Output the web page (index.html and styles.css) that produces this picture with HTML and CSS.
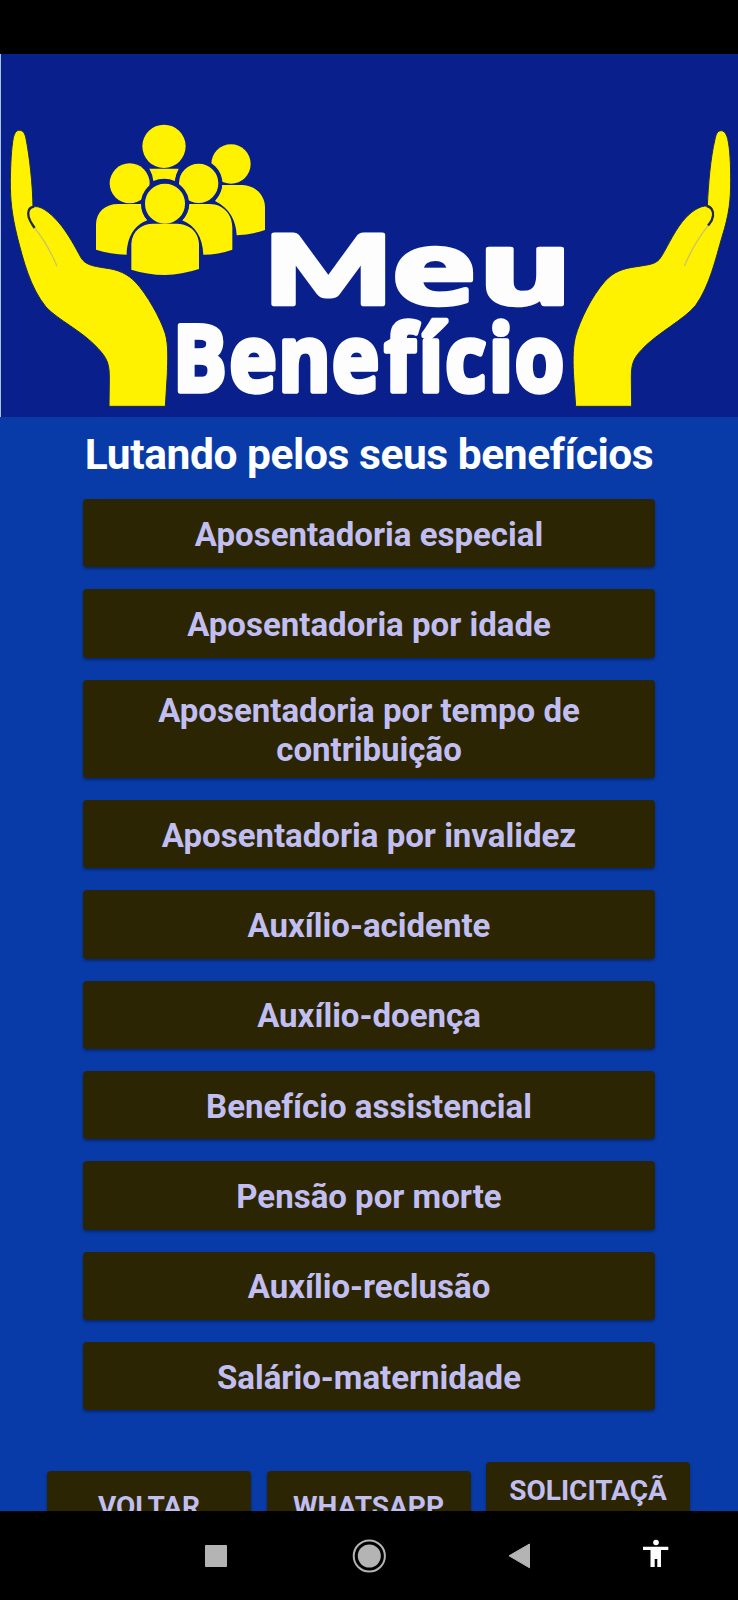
FILE: index.html
```html
<!DOCTYPE html>
<html lang="pt-BR">

<head>
  <meta charset="UTF-8">
  <meta name="viewport" content="width=device-width, initial-scale=1.0">
  <title>Meu Benefício</title>
  <link rel="stylesheet" href="styles.css">
</head>

<body>

  <div class="status"></div>

  <div class="tela">
    <svg class="logo" viewBox="0 41 2214 1089">
      <rect x="0" y="41" width="3" height="1089" fill="#a9c4ee"/>

      <!-- mão esquerda -->
      <g class="mao">
        <path d="M58 270C70 270 75 280 78 295C88 345 98 430 99 500C120 493 148 515 175 545C205 580 225 620 243 652C255 672 275 677 315 683C355 688 382 700 408 727C440 762 480 830 496 880C506 915 503 960 502 1000L496 1098H327L328 1020C329 970 322 955 295 925C245 870 175 840 138 800C90 740 70 660 52 590C35 520 31 480 31 420C32 370 34 325 40 292C44 278 49 270 58 270Z"/>
        <path class="dedo" d="M102 499C86 501 82 515 86 530C90 545 97 552 104 563"/>
        <path class="dobra" d="M104 563C130 595 155 640 171 678"/>
      </g>

      <!-- mão direita -->
      <g class="mao">
        <path d="M2163 271C2152 271 2148 282 2145 297C2132 350 2125 430 2122 497C2100 495 2070 515 2048 543C2018 580 1998 630 1979 656C1966 671 1950 673 1910 679C1870 684 1840 694 1814 724C1775 768 1740 840 1726 890C1717 930 1719 975 1721 1010L1727 1098H1895L1894 1020C1893 970 1900 955 1925 928C1975 875 2050 840 2087 795C2130 735 2148 650 2166 590C2188 520 2192 480 2192 420C2192 370 2190 325 2183 295C2178 278 2172 271 2163 271Z"/>
        <path class="dedo" d="M2120 497C2134 499 2141 512 2139 527C2137 542 2130 548 2124 556"/>
        <path class="dobra" d="M2124 556C2098 590 2068 640 2053 678"/>
      </g>

      <!-- grupo de pessoas -->
      <g class="pessoas">
        <circle cx="492" cy="318" r="65"/>
        <path d="M448 385H536Q526 405 525 422Q492 408 460 422Q458 402 448 385Z"/>
        <circle cx="693" cy="371" r="59"/>
        <path d="M640 434H728C770 436 795 468 795 500V569Q755 583 710 585C708 540 690 505 645 482Q662 460 666 434Z"/>
        <circle cx="389" cy="429" r="60"/>
        <path d="M288 628V552C289 515 315 491 355 491H425Q424 520 442 540C405 555 382 585 380 643Q330 641 288 628Z"/>
        <circle class="borda" cx="596" cy="429" r="65"/>
        <path d="M568 491H630C668 492 697 520 697 562V628Q655 643 610 643C608 590 585 555 546 540Q565 520 568 491Z"/>
        <circle class="borda" cx="495" cy="490" r="66"/>
        <path d="M394 688V610C396 572 425 550 460 550H532C568 551 596 575 597 612V686Q545 703 496 704Q440 703 394 688Z"/>
      </g>

      <g class="nome">
        <text class="meu" transform="scale(1.42 1)" x="559 828 1011" y="791"><tspan class="inicial">M</tspan>eu</text>
        <text class="beneficio" transform="scale(.88 1)" x="590 782 949 1132 1311 1428 1518 1666 1755" y="1051">Benefício</text>
      </g>
    </svg>

    <h1 class="titulo">Lutando pelos seus benefícios</h1>

    <div class="lista">
      <button class="botao">Aposentadoria especial</button>
      <button class="botao">Aposentadoria por idade</button>
      <button class="botao alto">Aposentadoria por tempo de contribuição</button>
      <button class="botao">Aposentadoria por invalidez</button>
      <button class="botao">Auxílio-acidente</button>
      <button class="botao">Auxílio-doença</button>
      <button class="botao">Benefício assistencial</button>
      <button class="botao">Pensão por morte</button>
      <button class="botao">Auxílio-reclusão</button>
      <button class="botao">Salário-maternidade</button>
    </div>

    <div class="acoes">
      <button class="botao acao">VOLTAR</button>
      <button class="botao acao">WHATSAPP</button>
      <button class="botao acao dupla">SOLICITAÇÃO</button>
    </div>
  </div>

  <div class="navegacao">
    <svg viewBox="0 0 738 89">
      <rect x="205" y="34" width="22" height="22" rx="1" fill="#b4b4b4"/>
      <circle cx="369.3" cy="45" r="15.6" fill="none" stroke="#b4b4b4" stroke-width="2"/>
      <circle cx="369.3" cy="45" r="11.5" fill="#b4b4b4"/>
      <path d="M509 44.8L529.5 33V56.8Z" fill="#b4b4b4" stroke="#b4b4b4" stroke-linejoin="round"/>
      <circle cx="656" cy="31.5" r="2.8" fill="#fff"/>
      <path d="M643 35.7H668.3V39H661V56H657.3V48H654.7V56H650.5V39H643Z" fill="#fff"/>
    </svg>
  </div>

</body>

</html>
```
FILE: styles.css
```css
* {
  box-sizing: border-box;
}

body {
  font-family: Roboto, sans-serif;
  background-color: #000;
  margin: 0;
  height: 1600px;
  overflow: hidden;
}

.status {
  height: 54px;
  background-color: #000;
}

.tela {
  height: 1457px;
  background-color: #083ba8;
  overflow: hidden;
}

.logo {
  display: block;
  width: 738px;
  height: 363px;
  background-color: #081f8c;
}

.mao path {
  fill: #fff200;
  stroke: #1b2a50;
  stroke-width: 3;
}

.mao .dedo {
  fill: none;
  stroke: #20284a;
  stroke-width: 7;
}

.mao .dobra {
  fill: none;
  stroke: #c9c468;
  stroke-width: 4;
}

.pessoas {
  fill: #fff200;
}

.pessoas .borda {
  stroke: #081f8c;
  stroke-width: 12;
}

.nome {
  font-family: "Open Sans", sans-serif;
  font-weight: bold;
  fill: #fdfdfd;
  stroke: #fdfdfd;
  stroke-linejoin: round;
}

.meu {
  font-size: 300px;
  stroke-width: 14;
}

.inicial {
  font-family: Lato, sans-serif;
  font-size: 283px;
  font-weight: 900;
}

.beneficio {
  font-size: 272px;
  stroke-width: 16;
}

.titulo {
  margin: 0;
  height: 82px;
  padding-top: 13px;
  color: #fff;
  font-size: 42.5px;
  line-height: 50px;
  letter-spacing: -0.43px;
  text-align: center;
  white-space: nowrap;
}

.lista {
  display: flex;
  flex-direction: column;
  gap: 22px;
  padding: 0 83px;
}

.botao {
  height: 68.33px;
  padding: 2px 40px 0;
  border: none;
  border-radius: 4px;
  background-color: #2c2503;
  box-shadow: 0 2px 3px rgba(0, 0, 0, 0.35);
  color: #c1bff2;
  font-family: inherit;
  font-size: 33px;
  font-weight: bold;
  line-height: 39px;
  cursor: pointer;
}

.alto {
  height: 98.3px;
}

.acoes {
  display: flex;
  align-items: flex-start;
  gap: 15.5px;
  padding: 52px 48px 0 47px;
}

.acao {
  flex: 1;
  height: 68px;
  margin-top: 9px;
  padding: 2px 18px 0;
  font-size: 28px;
  line-height: 33px;
  word-break: break-all;
}

.dupla {
  height: 86px;
  margin-top: 0;
  padding-top: 4px;
}

.navegacao {
  height: 89px;
  background-color: #000;
}

.navegacao svg {
  display: block;
  width: 738px;
  height: 89px;
}
```
